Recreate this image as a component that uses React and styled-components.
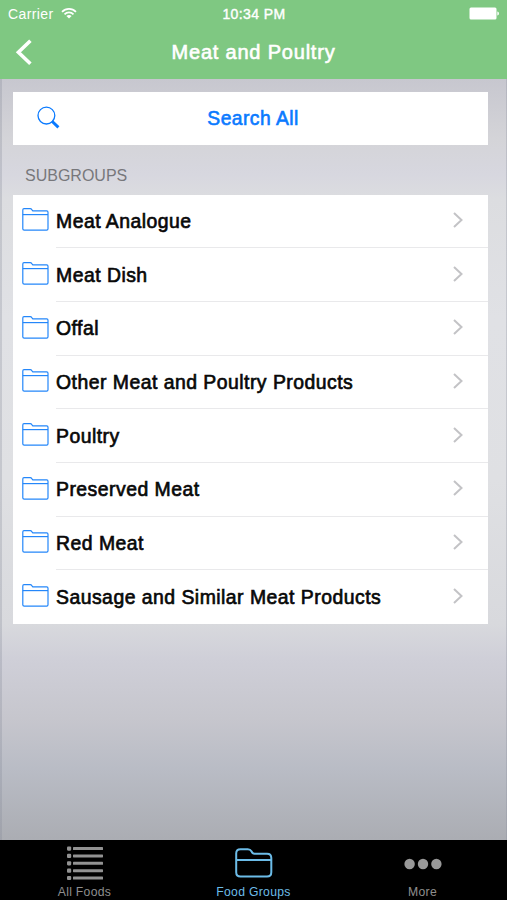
import React from 'react'
import styled, {createGlobalStyle} from 'styled-components'

const groups = [
  'Meat Analogue',
  'Meat Dish',
  'Offal',
  'Other Meat and Poultry Products',
  'Poultry',
  'Preserved Meat',
  'Red Meat',
  'Sausage and Similar Meat Products',
]

function WifiIcon() {
  return (
    <svg width="16" height="13" viewBox="0 0 16 13" fill="none" stroke="#fff" strokeWidth="1.7">
      <path d="M1 4.8C5 .8 11 .8 15 4.8" />
      <path d="M3.5 7.3C6 4.8 10 4.8 12.5 7.3" />
      <path d="M8 11.6L5.4 9C6.9 7.6 9.1 7.6 10.6 9Z" fill="#fff" stroke="none" />
    </svg>
  )
}

function BatteryIcon() {
  return (
    <svg width="31" height="13" viewBox="0 0 31 13" fill="#fff">
      <rect x="0.5" y="0.5" width="27" height="12" rx="1.5" />
      <path d="M28.3 4.5C30.5 5 30.5 8 28.3 8.5Z" />
    </svg>
  )
}

function BackIcon() {
  return (
    <svg width="17" height="27" viewBox="0 0 17 27" fill="none" stroke="#fff" strokeWidth="3.6">
      <path d="M15.4 1.8L3.4 13.3L15.4 24.8" />
    </svg>
  )
}

function SearchIcon() {
  return (
    <svg width="24" height="24" viewBox="0 0 24 24" fill="none" stroke="#0a7aff">
      <circle cx="9.4" cy="9.6" r="8.4" strokeWidth="1.3" />
      <path d="M15 15.2L21.4 21.4" strokeWidth="2.9" />
    </svg>
  )
}

function FolderIcon() {
  return (
    <svg width="27" height="24" viewBox="0 0 27 24" fill="none" stroke="#2487fa" strokeWidth="1.2">
      <path d="M.8 21.3V2Q.8.7 2 .7H8.2Q9.2.7 9.8 1.6L10.8 2.9H24.7Q26 2.9 26 4.3V20.7Q26 22.1 24.7 22.1H2.2Q.8 22.1.8 20.7Z" />
      <path d="M.8 6.6H26" />
    </svg>
  )
}

function ArrowIcon() {
  return (
    <svg width="11" height="18" viewBox="0 0 11 18" fill="none" stroke="#c3c3c6" strokeWidth="2">
      <path d="M1 1.9L8.5 9L1 16.1" />
    </svg>
  )
}

function ListIcon() {
  return (
    <svg width="38" height="35" viewBox="0 0 38 35" fill="#929292">
      {[0, 1, 2, 3, 4].map((i) => (
        <g key={i}>
          <rect x="1" y={0.5 + i * 7.35} width="4.2" height="4.2" rx="1.1" />
          <rect x="7" y={1.1 + i * 7.35} width="30" height="3" rx="0.6" />
        </g>
      ))}
    </svg>
  )
}

function TabFolderIcon() {
  return (
    <svg width="38" height="31" viewBox="0 0 38 31" fill="none" stroke="#6cbce8" strokeWidth="2">
      <path d="M1.2 5.5Q1.2 1.2 5.5 1.2H12.8Q15.3 1.2 16.4 3.2Q17.4 5.8 19.5 5.8H32Q36.3 5.8 36.3 10V24.3Q36.3 28.6 32 28.6H5.5Q1.2 28.6 1.2 24.3Z" />
      <path d="M1.2 12H36.3" />
    </svg>
  )
}

function MoreIcon() {
  return (
    <svg width="38" height="12" viewBox="0 0 38 12" fill="#999">
      <circle cx="5.6" cy="6" r="5.2" />
      <circle cx="19" cy="6" r="5.2" />
      <circle cx="32.4" cy="6" r="5.2" />
    </svg>
  )
}

function App() {
  return (
    <Screen>
      <GlobalStyle />
      <Header>
        <StatusBar>
          <Carrier>Carrier <WifiIcon /></Carrier>
          <Clock>10:34 PM</Clock>
          <Battery><BatteryIcon /></Battery>
        </StatusBar>
        <NavBar>
          <BackButton aria-label="Back"><BackIcon /></BackButton>
          <Title>Meat and Poultry</Title>
        </NavBar>
      </Header>
      <Content>
        <SearchButton>
          <SearchIcon />
          <SearchLabel>Search All</SearchLabel>
        </SearchButton>
        <SectionTitle>SUBGROUPS</SectionTitle>
        <List>
          {groups.map((name) => (
            <Row key={name}>
              <FolderIcon />
              <RowBody>
                <RowLabel>{name}</RowLabel>
                <ArrowIcon />
              </RowBody>
            </Row>
          ))}
        </List>
      </Content>
      <TabBar>
        <Tab><TabIcon><ListIcon /></TabIcon>All Foods</Tab>
        <Tab $active><TabIcon><TabFolderIcon /></TabIcon>Food Groups</Tab>
        <Tab><TabIcon><MoreIcon /></TabIcon>More</Tab>
      </TabBar>
    </Screen>
  )
}

const GlobalStyle = createGlobalStyle`
  * {
    box-sizing: border-box;
  }
  body {
    margin: 0;
    font-family: "Liberation Sans", Arial, sans-serif;
  }
  button {
    font: inherit;
    border: 0;
    padding: 0;
    background: none;
  }
  svg {
    display: block;
    flex: none;
  }
`

const Screen = styled.div`
  display: flex;
  flex-direction: column;
  width: 507px;
  height: 900px;
  overflow: hidden;
`

const Header = styled.header`
  height: 79px;
  background: #7fc882;
  color: #fff;
`

const StatusBar = styled.div`
  display: grid;
  grid-template-columns: 1fr auto 1fr;
  align-items: center;
  height: 27px;
  padding: 0 7px 0 8px;
  font-size: 14px;
`

const Carrier = styled.span`
  display: flex;
  align-items: center;
  gap: 7px;
  letter-spacing: 0.4px;
`

const Clock = styled.span`
  letter-spacing: 0.4px;
  -webkit-text-stroke: 0.4px #fff;
`

const Battery = styled.span`
  justify-self: end;
`

const NavBar = styled.div`
  display: grid;
  grid-template-columns: 60px 1fr 60px;
  align-items: center;
  height: 51px;
`

const BackButton = styled.button`
  padding-left: 15px;
`

const Title = styled.h1`
  margin: 0;
  text-align: center;
  font-size: 20px;
  font-weight: 400;
  letter-spacing: 0.8px;
  -webkit-text-stroke: 0.6px #fff;
`

const Content = styled.main`
  flex: 1;
  padding: 13px 19px 0 13px;
  background:
    linear-gradient(90deg, rgba(130, 135, 150, 0.28) 2px, transparent 2px, transparent 506px, rgba(130, 135, 150, 0.28) 506px),
    linear-gradient(#c7c7cf 0, #d4d4d8 60px, #d7d7df 95px, #dcdde0 120px, #e0e1e5 240px, #dfe0e3 400px, #d8d9dd 545px, #cfcfd8 580px, #c6c6cd 640px, #b9bcc5 690px, #abadb3 760px);
`

const SearchButton = styled.button`
  display: flex;
  align-items: center;
  width: 475px;
  height: 52.5px;
  padding: 0 24px;
  background: #fff;
  color: #0a7aff;
`

const SearchLabel = styled.span`
  flex: 1;
  padding: 2px 19px 0 0;
  font-size: 19.3px;
  letter-spacing: 0.45px;
  -webkit-text-stroke: 0.6px #0a7aff;
`

const SectionTitle = styled.h2`
  height: 50px;
  margin: 0;
  padding: 21px 12px 0;
  font-size: 16px;
  line-height: 20px;
  font-weight: 400;
  color: #77777b;
`

const List = styled.ul`
  margin: 0;
  padding: 0;
  list-style: none;
  background: #fff;
`

const RowBody = styled.div`
  flex: 1;
  display: flex;
  align-items: center;
  justify-content: space-between;
  height: 100%;
  padding-right: 24px;
  border-bottom: 1px solid #e9e9eb;

  > svg {
    margin-top: -2px;
  }
`

const Row = styled.li`
  display: flex;
  align-items: center;
  gap: 7px;
  height: 53.7px;
  padding-left: 9px;

  > svg {
    margin-top: -2px;
  }

  &:last-child ${RowBody} {
    border-bottom-color: transparent;
  }
`

const RowLabel = styled.span`
  padding-top: 1px;
  font-size: 19.4px;
  letter-spacing: 0.48px;
  color: #080808;
  -webkit-text-stroke: 0.65px #080808;
`

const TabBar = styled.nav`
  display: grid;
  grid-template-columns: repeat(3, 1fr);
  height: 60px;
  background: #000;
`

const Tab = styled.div`
  display: flex;
  flex-direction: column;
  align-items: center;
  font-size: 12.2px;
  line-height: 14px;
  letter-spacing: 0.3px;
  color: ${(props) => (props.$active ? '#6cbce8' : '#8e8e8e')};
`

const TabIcon = styled.span`
  display: flex;
  align-items: center;
  height: 45px;
  padding-top: 2px;
`

export default App
